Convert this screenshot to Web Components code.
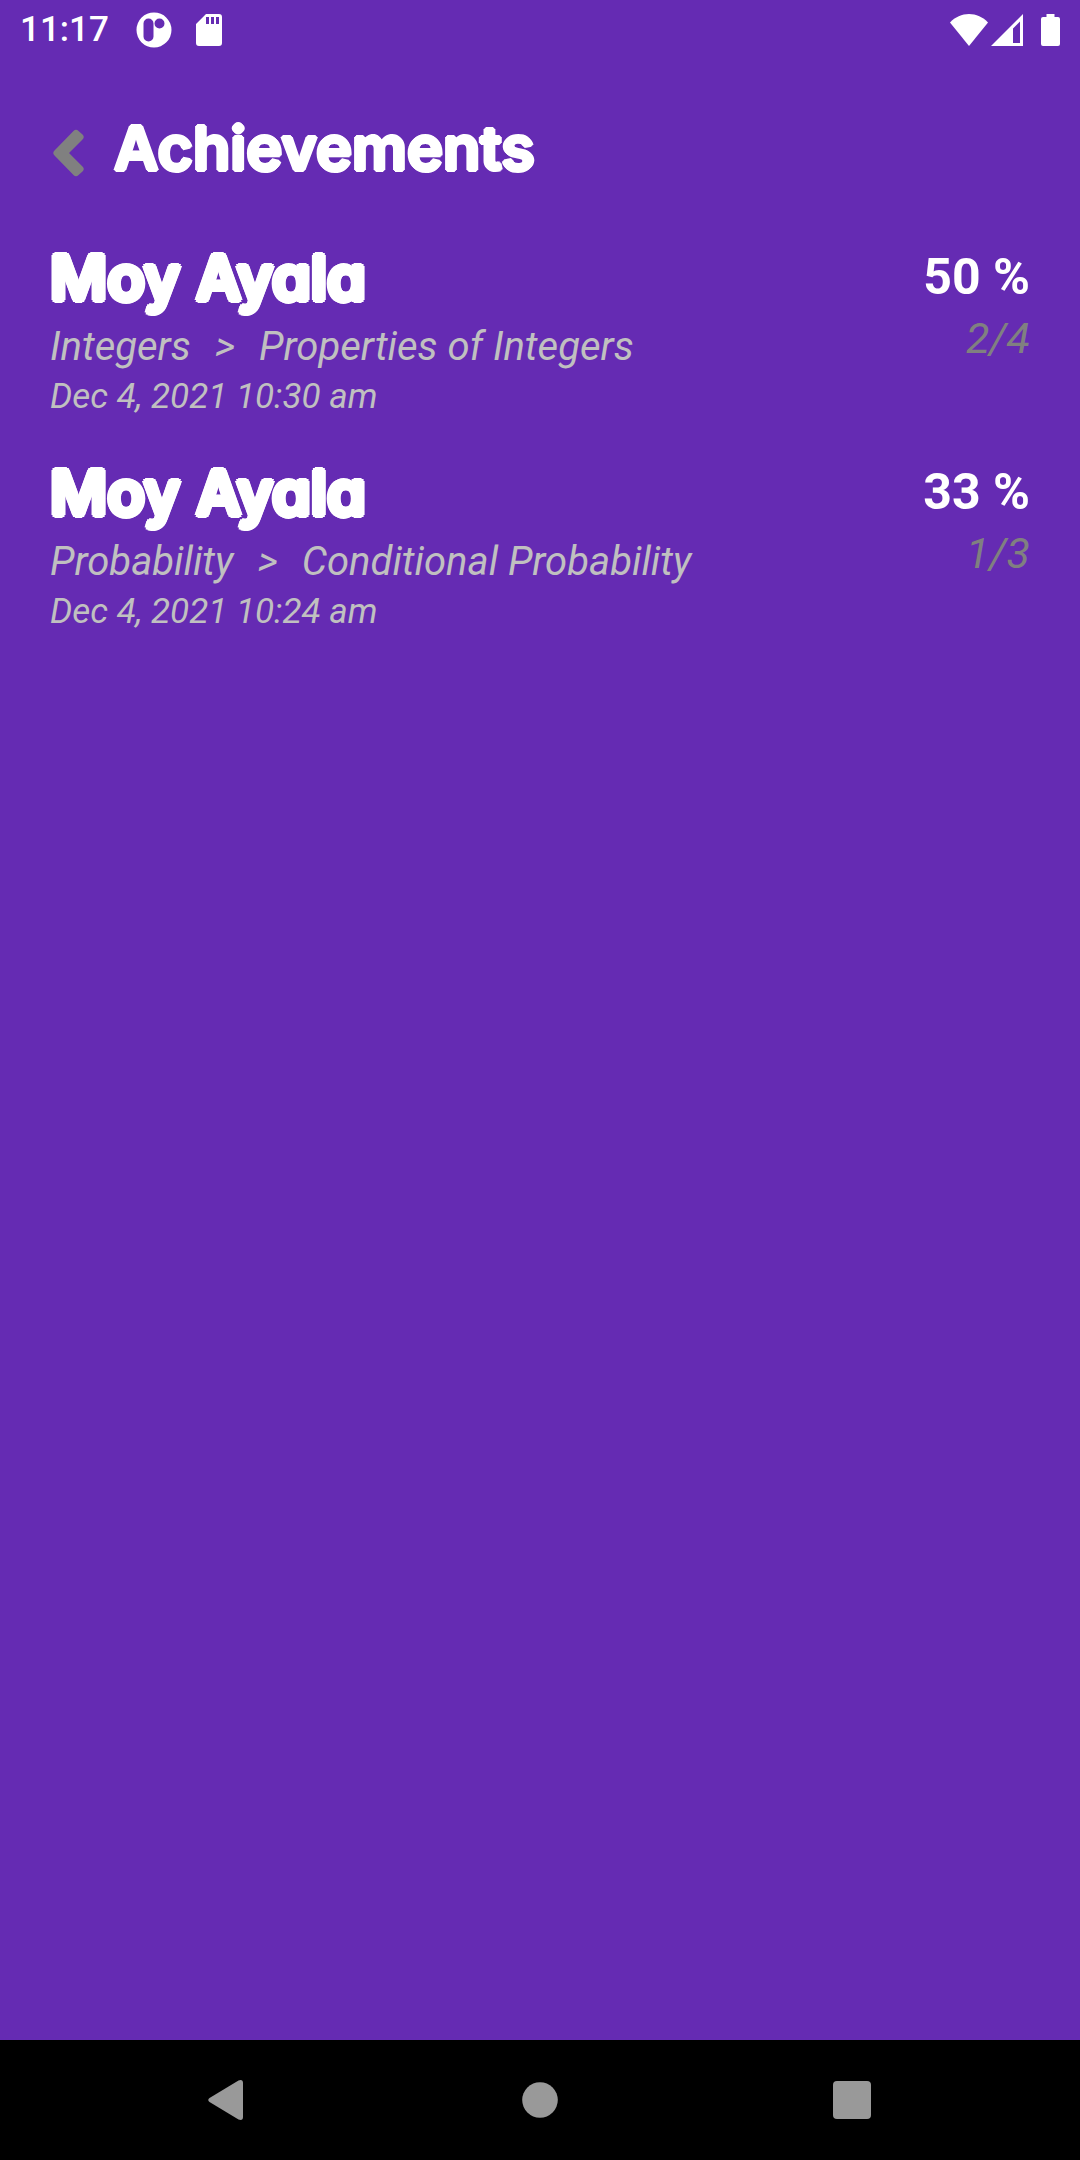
<!DOCTYPE html>
<html lang="en">
<head>
<meta charset="utf-8">
<meta name="viewport" content="width=device-width, initial-scale=1">
<title>Achievements</title>
<style>
  html, body { margin: 0; }
  body { font-family: Roboto, "Liberation Sans", sans-serif; background: #652bb3; color: #fff; }
</style>
</head>
<body>
<achievements-app>
  <status-bar slot="status">11:17</status-bar>
  <page-header slot="header">Achievements</page-header>
  <score-entry subject="Integers" topic="Properties of Integers" date="Dec 4, 2021 10:30 am" percent="50 %" score="2/4">Moy Ayala</score-entry>
  <score-entry subject="Probability" topic="Conditional Probability" date="Dec 4, 2021 10:24 am" percent="33 %" score="1/3">Moy Ayala</score-entry>
  <nav-bar slot="nav"></nav-bar>
</achievements-app>
<script>
const define = (name, html, setup) => customElements.define(name, class extends HTMLElement {
  constructor() {
    super();
    this.attachShadow({ mode: 'open' }).innerHTML = html;
  }
  connectedCallback() { if (setup) setup(this); }
});

define('achievements-app', `
<style>
  :host { display: flex; flex-direction: column; min-height: 100vh; }
  main { flex: 1; display: flex; flex-direction: column; gap: 35px; padding: 52px 50px; }
</style>
<slot name="status"></slot>
<slot name="header"></slot>
<main><slot></slot></main>
<slot name="nav"></slot>`);

define('status-bar', `
<style>
  :host { display: flex; align-items: center; height: 60px; padding: 0 20px; font-size: 35px; font-weight: 500; line-height: 60px; }
  svg { display: block; fill: #fff; }
  .left, .right { display: flex; align-items: center; }
  .left { gap: 24px; margin-left: 27px; }
  .right { margin-left: auto; gap: 3px; }
  .battery { margin-left: 15px; }
</style>
<slot></slot>
<div class="left">
  <svg width="36" height="36" viewBox="0 0 36 36"><path fill-rule="evenodd" d="M18 .5a17.5 17.5 0 1 0 0 35 17.5 17.5 0 0 0 0-35ZM12.500 6.500a5 5 0 0 1 5 5v13a5 5 0 0 1-10 0v-13a5 5 0 0 1 5-5ZM23.500 6.500a5 5 0 1 1 0 10 5 5 0 0 1 0-10Z"/></svg>
  <svg width="26" height="32" viewBox="0 0 26 32"><path fill-rule="evenodd" d="M10 0h13a3 3 0 0 1 3 3v26a3 3 0 0 1-3 3H3a3 3 0 0 1-3-3V10ZM10 3v7h3V3ZM15 3v7h3V3ZM20 3v7h3V3Z"/></svg>
</div>
<div class="right">
  <svg width="38" height="32" viewBox="0 0 38 32"><path d="M0 8.500C5 3 12 0 19 0s14 3 19 8.500L19 32Z"/></svg>
  <svg width="32" height="32" viewBox="0 0 32 32"><path fill-rule="evenodd" d="M32 0v32H0ZM29 7.500l-7 7V29h7Z"/></svg>
  <svg class="battery" width="19" height="32" viewBox="0 0 19 32"><path d="M5.500 0h8v3H17a2 2 0 0 1 2 2v25a2 2 0 0 1-2 2H2a2 2 0 0 1-2-2V5a2 2 0 0 1 2-2h3.500Z"/></svg>
</div>`);

// Heavy display face with rounded stroke ends: a ring of solid shadows thickens each letter.
const ring = r => {
  const d = r - 1;
  return [[r, 0], [-r, 0], [0, r], [0, -r], [d, d], [-d, d], [d, -d], [-d, -d]]
    .map(([x, y]) => `${x}px ${y}px #fff`).join(', ');
};
const display = (size, line, r) =>
  `font: 600 ${size}px/${line}px Inter, Lato, sans-serif; font-feature-settings: "cv11"; text-shadow: ${ring(r)};`;

define('page-header', `
<style>
  :host { display: flex; align-items: center; gap: 29px; padding: 48px 50px 0; }
  button { flex: none; border: 0; padding: 10px 0 0 3px; background: none; }
  svg { display: block; fill: #808080; }
  h1 { margin: 0; ${display(61, 80, 2)} }
</style>
<button type="button" aria-label="Back"><svg width="32" height="50" viewBox="0 0 32 50"><path d="M1.500 22.500 20.500 3Q23 .5 25.500 3l4 3.500Q32 9 29.500 11.500L16 25l13.500 13.500Q32 41 29.500 43.500L25.500 47Q23 49.500 20.500 47L1.500 27.500Q-1 25 1.500 22.500Z"/></svg></button>
<h1><slot></slot></h1>`);

define('score-entry', `
<style>
  :host { display: flex; justify-content: space-between; }
  h2, p { margin: 0; }
  h2 { margin-bottom: 4px; ${display(62, 76, 3)} }
  p { font-style: italic; color: silver; }
  .path { display: flex; gap: 24px; font-size: 40px; line-height: 54px; }
  .date { font-size: 35px; line-height: 46px; }
  .result { padding-top: 7px; text-align: right; line-height: 60px; }
  .percent { font-size: 50px; font-weight: 700; font-style: normal; color: #fff; }
  .score { font-size: 43px; line-height: 62px; color: #808080; }
</style>
<div>
  <h2><slot></slot></h2>
  <p class="path"><span data-field="subject"></span><span>&gt;</span><span data-field="topic"></span></p>
  <p class="date" data-field="date"></p>
</div>
<div class="result">
  <p class="percent" data-field="percent"></p>
  <p class="score" data-field="score"></p>
</div>`, host => {
  for (const el of host.shadowRoot.querySelectorAll('[data-field]'))
    el.textContent = host.getAttribute(el.dataset.field);
});

define('nav-bar', `
<style>
  :host { display: block; background: #000; }
  nav { display: grid; grid-template-columns: repeat(3, 1fr); height: 120px; padding: 0 72px; }
  button { display: flex; align-items: center; justify-content: center; border: 0; padding: 0; background: none; }
  svg { display: block; fill: #999; }
</style>
<nav aria-label="System">
  <button type="button" aria-label="Back"><svg width="40" height="40" viewBox="0 0 40 40"><path d="M1.500 18 30.500.5Q35-1 35 3v34q0 4-4.500 2.500L1.500 22Q-1 20 1.500 18Z"/></svg></button>
  <button type="button" aria-label="Home"><svg width="36" height="36" viewBox="0 0 36 36"><circle cx="18" cy="18" r="17.800"/></svg></button>
  <button type="button" aria-label="Recent apps"><svg width="38" height="38" viewBox="0 0 38 38"><rect width="38" height="38" rx="4"/></svg></button>
</nav>`);
</script>
</body>
</html>
